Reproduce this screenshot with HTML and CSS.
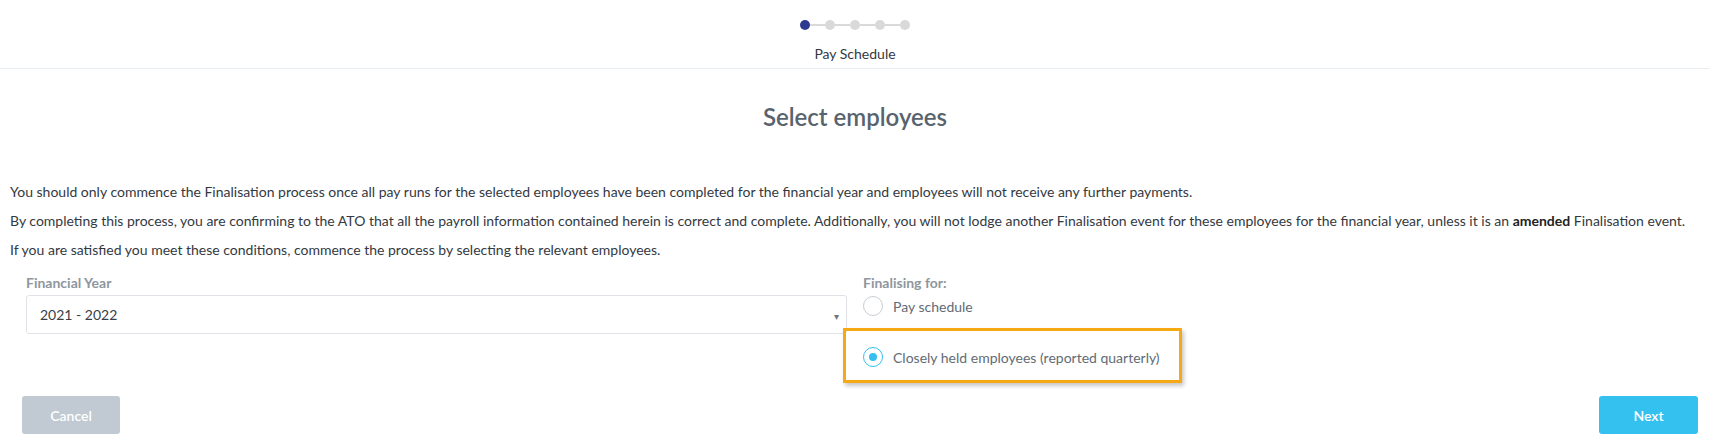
FILE: index.html
```html
<!DOCTYPE html>
<html lang="en">
<head>
<meta charset="utf-8">
<title>Select employees</title>
<link rel="stylesheet" href="styles.css">
</head>
<body>
<header class="header">
  <div class="stepper">
    <span class="dot dot-active"></span><span class="link"></span>
    <span class="dot"></span><span class="link"></span>
    <span class="dot"></span><span class="link"></span>
    <span class="dot"></span><span class="link"></span>
    <span class="dot"></span>
  </div>
  <div class="step-label">Pay Schedule</div>
</header>
<main class="main">
  <h1 class="title">Select employees</h1>
  <div class="intro">
    <p>You should only commence the Finalisation process once all pay runs for the selected employees have been completed for the financial year and employees will not receive any further payments.</p>
    <p>By completing this process, you are confirming to the ATO that all the payroll information contained herein is correct and complete. Additionally, you will not lodge another Finalisation event for these employees for the financial year, unless it is an <strong>amended</strong> Finalisation event.</p>
    <p>If you are satisfied you meet these conditions, commence the process by selecting the relevant employees.</p>
  </div>
  <div class="form-row">
    <div class="field">
      <label class="field-label">Financial Year</label>
      <div class="select"><span>2021 - 2022</span><span class="caret">&#9662;</span></div>
    </div>
    <div class="field">
      <div class="field-label">Finalising for:</div>
      <div class="option"><span class="radio"></span><span class="option-text">Pay schedule</span></div>
      <div class="option option-highlight"><span class="radio radio-checked"></span><span class="option-text">Closely held employees (reported quarterly)</span></div>
    </div>
  </div>
  <div class="actions">
    <button class="btn btn-cancel">Cancel</button>
    <button class="btn btn-next">Next</button>
  </div>
</main>
</body>
</html>
```
FILE: styles.css
```css
* { box-sizing: border-box; }
body {
  margin: 0;
  font-family: Lato, "Liberation Sans", sans-serif;
  font-size: 14px;
  color: #33393f;
  background: #fff;
}
.header {
  height: 69px;
  border-bottom: 1px solid #e7edf1;
  display: flex;
  flex-direction: column;
  align-items: center;
}
.stepper {
  margin-top: 20px;
  display: flex;
  align-items: center;
  height: 10px;
}
.dot {
  width: 10px;
  height: 10px;
  border-radius: 50%;
  background: #d9d9d9;
}
.dot-active { background: #2b3990; }
.link {
  width: 15px;
  height: 2px;
  background: #d9d9d9;
}
.step-label {
  margin-top: 16px;
  line-height: 16px;
  font-size: 14px;
  color: #33393f;
}
.title {
  margin: 34px 0 0;
  text-align: center;
  font-size: 24px;
  line-height: 28px;
  font-weight: 600;
  color: #58636d;
}
.intro {
  margin-top: 51px;
  padding-left: 10px;
}
.intro p {
  margin: 0 0 9px;
  line-height: 20px;
}
.intro p:last-child { margin-bottom: 0; }
.intro strong { font-weight: 700; color: #222; }
.form-row {
  margin-top: 15px;
  padding-left: 26px;
  display: grid;
  grid-template-columns: 821px 1fr;
  column-gap: 16px;
}
.field-label {
  display: block;
  line-height: 16px;
  font-weight: 700;
  color: #8e969e;
}
.select {
  margin-top: 4px;
  height: 39px;
  border: 1px solid #dfe3e7;
  border-radius: 3px;
  padding: 0 7px 0 13px;
  display: flex;
  align-items: center;
  justify-content: space-between;
  color: #3a4046;
}
.caret {
  font-size: 10px;
  color: #6f767d;
  margin-top: 2px;
}
.option {
  display: flex;
  align-items: center;
  height: 24px;
  margin-top: 3px;
  color: #626b74;
}
.radio {
  width: 20px;
  height: 20px;
  border-radius: 50%;
  border: 1px solid #c8cdd2;
  margin-right: 10px;
  display: flex;
  align-items: center;
  justify-content: center;
  flex: none;
}
.radio-checked { border-color: #34bff0; }
.radio-checked::after {
  content: "";
  width: 8px;
  height: 8px;
  border-radius: 50%;
  background: #34bff0;
}
.option-highlight {
  margin-top: 10px;
  margin-left: -20px;
  width: 339px;
  height: 55px;
  border: 3px solid #f6a913;
  padding: 3px 0 0 17px;
  box-shadow: 2px 3px 4px rgba(0, 0, 0, 0.22);
}
.actions {
  margin-top: 13px;
  padding: 0 12px 0 22px;
  display: flex;
  justify-content: space-between;
}
.btn {
  height: 38px;
  width: 98px;
  border: none;
  border-radius: 3px;
  color: #fff;
  font-family: inherit;
  font-size: 14px;
  font-weight: 600;
}
.btn-cancel { background: #c1c9d2; }
.btn-next { background: #35c1f0; width: 99px; }
```
